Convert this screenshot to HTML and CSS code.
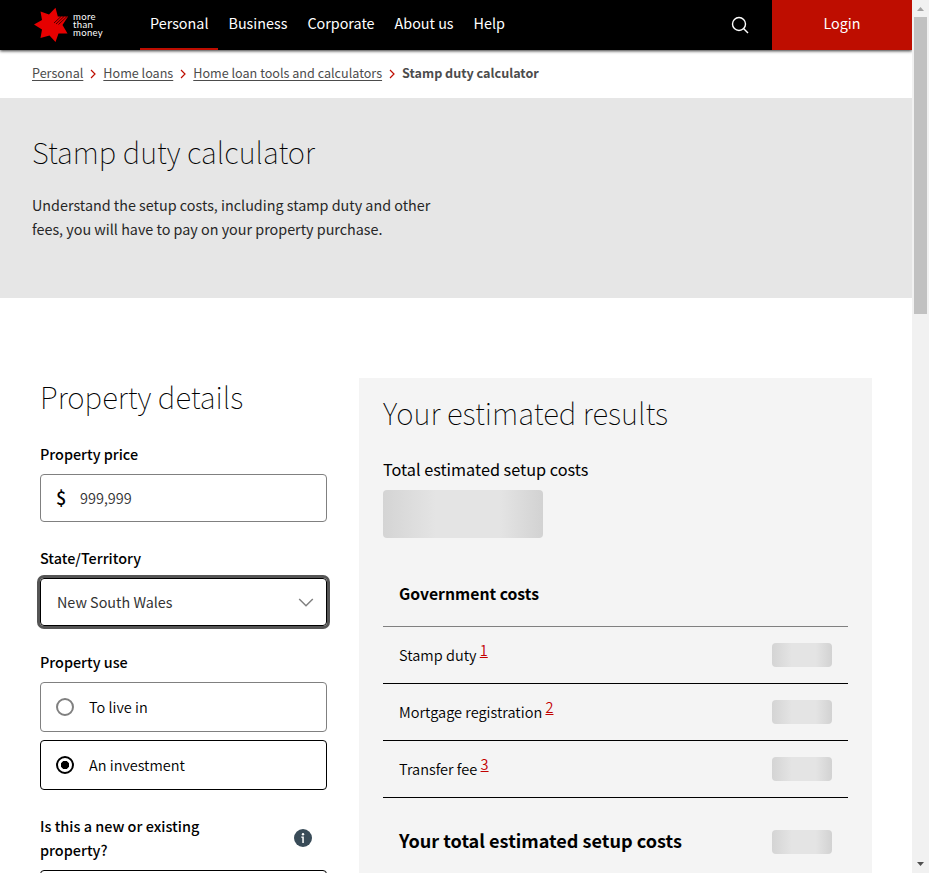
FILE: index.html
```
<!DOCTYPE html>
<html lang="en">
<head>
<meta charset="utf-8">
<title>Stamp duty calculator</title>
<link rel="stylesheet" href="styles.css">
</head>
<body>
<div class="page">
  <header class="header">
    <a class="logo">
      <svg class="logo-star" width="36" height="36" viewBox="0 0 36 36">
        <path fill="#e60000" d="M21.500 .8 L23.800 9.500 L34 9.500 L28.500 18 L33.500 26.500 L24.500 26.500 L21.500 35 L15.500 28.500 L6.500 31 L8 22.500 L0 17.500 L8 13 L6.500 4.500 L15 7.500 Z"/>
        <path stroke="#000" stroke-width=".7" fill="none" d="M20 16 L27 9.500 M22 17 L30 9.500 M24.500 17.500 L33 9.500"/>
      </svg>
      <span class="logo-text"><span>more</span><span>than</span><span>money</span></span>
    </a>
    <nav class="nav">
      <a class="nav-link active">Personal</a>
      <a class="nav-link">Business</a>
      <a class="nav-link">Corporate</a>
      <a class="nav-link">About us</a>
      <a class="nav-link">Help</a>
    </nav>
    <svg class="search" width="18" height="18" viewBox="0 0 18 18" fill="none" stroke="#fff" stroke-width="1.400"><circle cx="8" cy="8" r="6.500"/><path d="M12.500 12.500 L17 17"/></svg>
    <a class="login">Login</a>
  </header>
  <nav class="crumbs">
    <a>Personal</a>
    <svg width="6" height="10" viewBox="0 0 6 10"><path d="M1 1 L5 5 L1 9"/></svg>
    <a>Home loans</a>
    <svg width="6" height="10" viewBox="0 0 6 10"><path d="M1 1 L5 5 L1 9"/></svg>
    <a>Home loan tools and calculators</a>
    <svg width="6" height="10" viewBox="0 0 6 10"><path d="M1 1 L5 5 L1 9"/></svg>
    <strong>Stamp duty calculator</strong>
  </nav>
  <section class="hero">
    <h1>Stamp duty calculator</h1>
    <p>Understand the setup costs, including stamp duty and other<br>fees, you will have to pay on your property purchase.</p>
  </section>
  <main class="main">
    <form class="details">
      <h2>Property details</h2>
      <div class="label">Property price</div>
      <div class="field"><span class="dollar">$</span><span class="amount">999,999</span></div>
      <div class="label">State/Territory</div>
      <div class="field select"><span>New South Wales</span>
        <svg width="16" height="10" viewBox="0 0 16 10" fill="none" stroke="#808080" stroke-width="1.500"><path d="M1.200 2 L8 8.800 L14.800 2"/></svg>
      </div>
      <div class="label">Property use</div>
      <div class="option"><span class="radio"></span>To live in</div>
      <div class="option chosen"><span class="radio"></span>An investment</div>
      <div class="label question"><span>Is this a new or existing<br>property?</span>
        <svg width="18" height="18" viewBox="0 0 18 18"><circle cx="9" cy="9" r="9" fill="#394b58"/><g fill="#fff"><circle cx="9" cy="5.200" r="1.200"/><path d="M7.300 7.500h2.500v6.500H8.300V8.700h-1z"/></g></svg>
      </div>
      <div class="option chosen"></div>
    </form>
    <section class="results">
      <h2>Your estimated results</h2>
      <div class="total-label">Total estimated setup costs</div>
      <div class="skeleton large"></div>
      <div class="group">Government costs</div>
      <div class="row"><span>Stamp duty <a class="note">1</a></span><i class="skeleton"></i></div>
      <div class="row"><span>Mortgage registration <a class="note">2</a></span><i class="skeleton"></i></div>
      <div class="row"><span>Transfer fee <a class="note">3</a></span><i class="skeleton"></i></div>
      <div class="row sum"><span>Your total estimated setup costs</span><i class="skeleton"></i></div>
    </section>
  </main>
</div>
<div class="scrollbar">
  <svg width="7" height="4" viewBox="0 0 7 4"><path fill="#a3a3a3" d="M0 4 L3.500 0 L7 4z"/></svg>
  <div class="thumb"></div>
  <svg class="down" width="7" height="4" viewBox="0 0 7 4"><path fill="#505050" d="M0 0 L3.500 4 L7 0z"/></svg>
</div>
</body>
</html>
```
FILE: styles.css
```
* { box-sizing: border-box; }
body {
  margin: 0;
  height: 873px;
  display: flex;
  overflow: hidden;
  background: #fff;
  color: #000;
  font: 400 14.35px/24px "Noto Sans CJK SC", sans-serif;
}
h1, h2, p { margin: 0; }
.page { width: 912px; height: 873px; overflow: hidden; }

.header {
  position: relative;
  height: 50px;
  display: flex;
  align-items: center;
  background: #000;
  color: #fff;
  box-shadow: 0 1px 3px rgba(0, 0, 0, .8);
}
.logo { width: 140px; padding-left: 34px; display: flex; align-items: center; gap: 3px; }
.logo-star { flex: none; }
.logo-text { display: flex; flex-direction: column; font: 400 9.500px/8px "Lato", sans-serif; letter-spacing: .35px; }
.nav { display: flex; height: 50px; }
.nav-link { padding: 0 10px; line-height: 45px; height: 50px; }
.nav-link.active { border-bottom: 2px solid #be0d00; }
.search { margin-left: auto; margin-right: 23px; }
.login { width: 140px; height: 50px; line-height: 45px; text-align: center; background: #be0d00; }

.crumbs {
  height: 48px;
  padding: 0 32px 3px;
  display: flex;
  align-items: center;
  gap: 7px;
  color: #4c4c4c;
  font-size: 12.600px;
}
.crumbs a { text-decoration: underline; text-underline-offset: 2px; }
.crumbs svg { fill: none; stroke: #be0d00; stroke-width: 1.200; position: relative; top: 1px; }

.hero { height: 200px; padding: 29px 32px; background: #e6e6e6; color: #262626; }
h1, h2 { font-weight: 100; font-size: 29.400px; line-height: 48px; }
h1 { font-size: 29.300px; color: #000; }
.hero p { margin-top: 18px; }

.main { display: flex; gap: 32px; padding: 80px 40px 0; }
.details { width: 287px; }
.details h2 { line-height: 36px; margin-bottom: 28px; font-size: 29.500px; }
.label { font-weight: 500; margin-bottom: 8px; font-size: 14.400px; }
.field {
  height: 48px;
  margin-bottom: 24px;
  padding: 0 15px;
  display: flex;
  align-items: center;
  border: 1px solid #808080;
  border-radius: 4px;
  color: #333;
}
.dollar { width: 24px; font-size: 18px; line-height: 22px; padding-bottom: 2px; font-weight: 500; color: #000; }
.amount { font-weight: 350; font-size: 14.500px; }
.select {
  padding: 0 12px 0 16px;
  justify-content: space-between;
  border-color: #000;
  box-shadow: 0 0 0 3px #555;
}
.option {
  height: 50px;
  margin-bottom: 8px;
  padding-left: 15px;
  display: flex;
  align-items: center;
  gap: 15px;
  border: 1px solid #808080;
  border-radius: 4px;
  font-weight: 350;
  font-size: 14.500px;
}
.radio { width: 18px; height: 18px; border: 2px solid #808080; border-radius: 50%; }
.chosen { border-color: #000; }
.chosen .radio { border-color: #000; background: radial-gradient(circle, #000 3.800px, #fff 4.500px); }
.question { margin-top: 24px; margin-bottom: 8px; padding-right: 15px; display: flex; justify-content: space-between; align-items: center; font-size: 14.450px; }

.results { width: 513px; height: 520px; padding: 10px 24px; background: #f4f4f4; }
.results h2 { font-size: 29.500px; }
.total-label { margin-top: 21px; font-size: 16.250px; }
.skeleton {
  width: 60px;
  height: 24px;
  border-radius: 4px;
  background: linear-gradient(90deg, #d4d4d4, #e4e4e4 33%, #e4e4e4 73%, #d2d2d2);
}
.skeleton.large { width: 160px; height: 48px; margin-top: 9px; }
.group { height: 65px; margin-top: 24px; padding: 20px 16px 0; border-bottom: 1px solid #808080; font-weight: 700; font-size: 15.750px; }
.row {
  height: 57px;
  padding: 0 16px;
  display: flex;
  align-items: center;
  justify-content: space-between;
  border-bottom: 1px solid #000;
  font-weight: 350;
  font-size: 14.550px;
}
.note { position: relative; top: -5px; color: #c20000; text-decoration: underline; }
.sum { height: 88px; border: 0; font-weight: 700; font-size: 18.100px; }
.sum span { padding-bottom: 4px; }

.scrollbar { width: 17px; height: 873px; display: flex; flex-direction: column; align-items: center; padding: 7px 0 7px; background: #f1f1f1; }
.thumb { width: 13px; height: 297px; margin-top: 6px; background: #c1c1c1; }
.down { margin-top: auto; }
```
